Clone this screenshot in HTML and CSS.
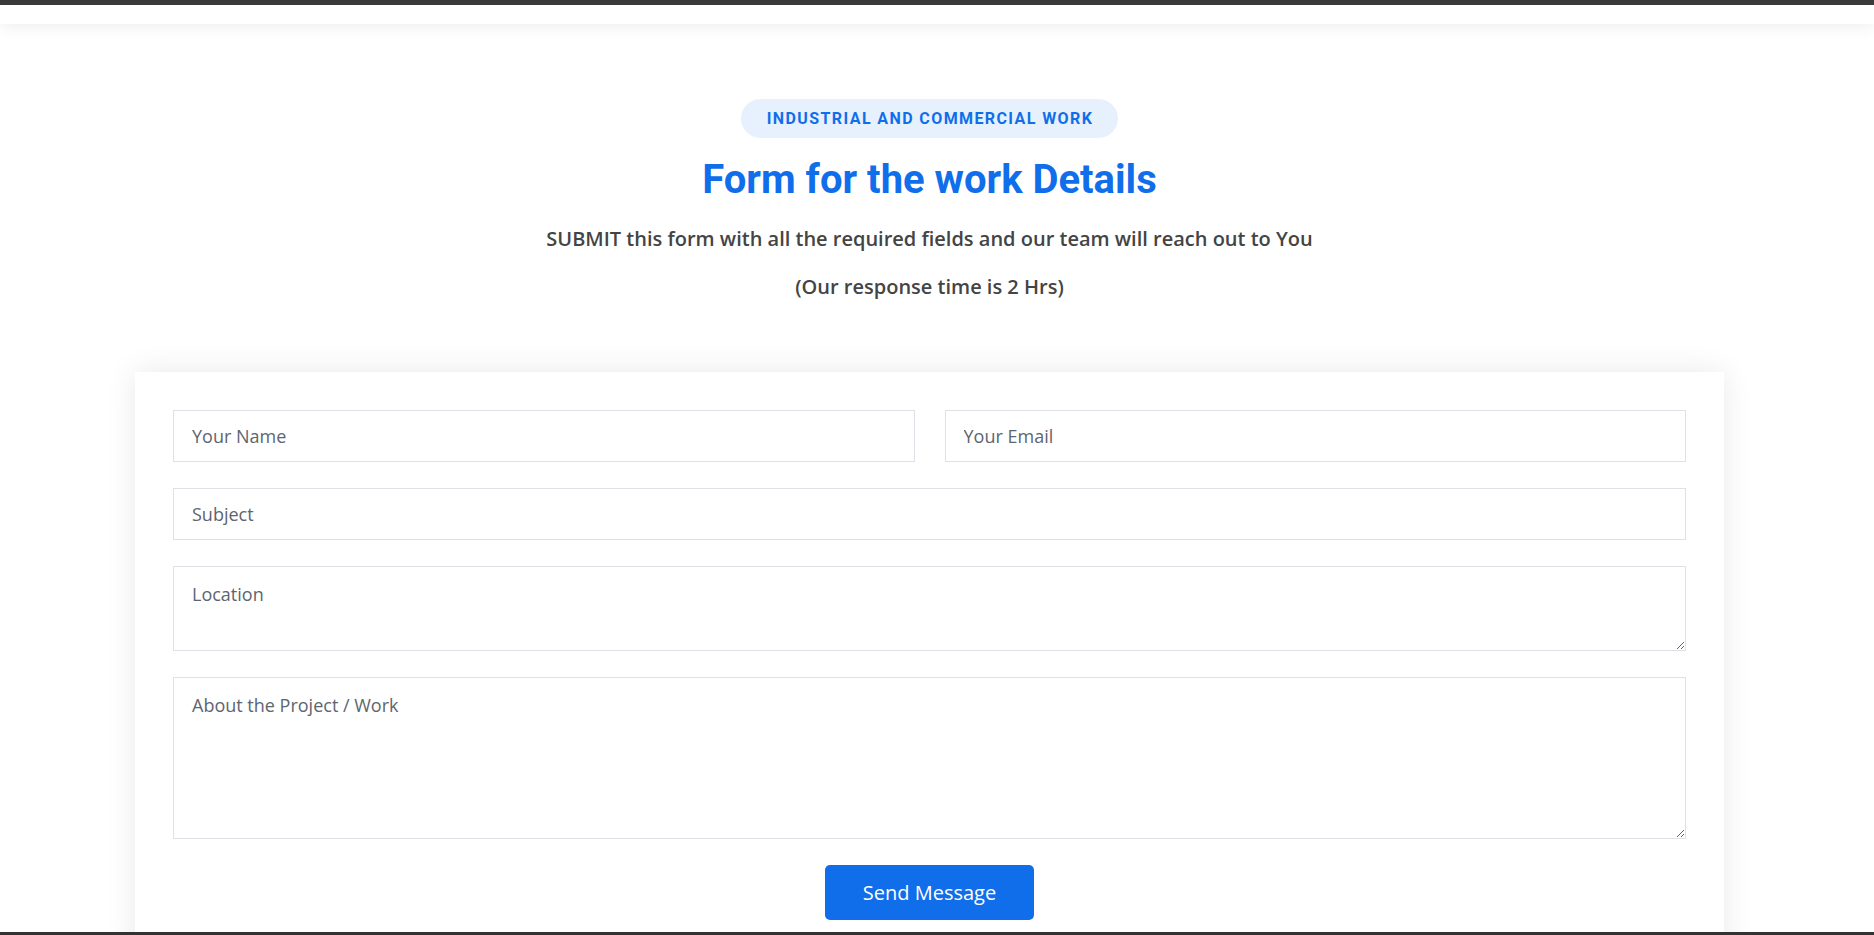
FILE: index.html
```html
<!DOCTYPE html>
<html lang="en">
<head>
<meta charset="utf-8">
<title>Form for the work Details</title>
<link rel="stylesheet" href="styles.css">
</head>
<body>
<header class="topbar"></header>
<div class="page">
  <section class="contact">
    <div class="section-title">
      <span class="badge">INDUSTRIAL AND COMMERCIAL WORK</span>
      <h3 class="heading">Form for the work Details</h3>
      <p class="lead">SUBMIT this form with all the required fields and our team will reach out to You</p>
      <p class="lead">(Our response time is 2 Hrs)</p>
    </div>
    <form class="card">
      <div class="row-2">
        <input class="field" type="text" placeholder="Your Name">
        <input class="field" type="email" placeholder="Your Email">
      </div>
      <input class="field" type="text" placeholder="Subject">
      <textarea class="field area-sm" placeholder="Location"></textarea>
      <textarea class="field area-lg" placeholder="About the Project / Work"></textarea>
      <div class="actions">
        <button class="btn" type="button">Send Message</button>
      </div>
    </form>
  </section>
</div>
<div class="frame-bottom"></div>
</body>
</html>
```

FILE: styles.css
```css
* { box-sizing: border-box; }

html, body {
  margin: 0;
  padding: 0;
  background: #ffffff;
}

body {
  font-family: "Open Sans", "Liberation Sans", sans-serif;
  color: #444444;
  overflow: hidden;
}

.topbar {
  height: 24px;
  background: #ffffff;
  border-top: 5px solid #3a3a3a;
  box-shadow: 0 2px 18px rgba(0, 0, 0, 0.08);
  position: relative;
  z-index: 2;
}

.page {
  padding-right: 15px;
}

.contact {
  width: 1589px;
  margin: 0 auto;
}

.section-title {
  text-align: center;
  padding-top: 75px;
}

.badge {
  display: inline-block;
  height: 39px;
  line-height: 39px;
  padding: 0 25px 0 26px;
  border-radius: 50px;
  background: #e7f1fd;
  color: #106eea;
  font-family: Roboto, "Liberation Sans", sans-serif;
  font-weight: 700;
  font-size: 16px;
  letter-spacing: 1.4px;
}

.heading {
  margin: 18px 0 20px;
  font-family: Roboto, "Liberation Sans", sans-serif;
  font-weight: 700;
  font-size: 40px;
  line-height: 48px;
  color: #106eea;
}

.lead {
  margin: 0 0 18px;
  font-size: 20px;
  line-height: 30px;
  font-weight: 600;
  color: #444444;
}

.lead:last-child {
  margin-bottom: 0;
}

.card {
  margin-top: 70px;
  background: #ffffff;
  padding: 38px 38px 38px;
  box-shadow: 0 0 30px rgba(0, 0, 0, 0.09);
  display: flex;
  flex-direction: column;
  gap: 26px;
}

.row-2 {
  display: grid;
  grid-template-columns: 1fr 1fr;
  gap: 30px;
}

.field {
  display: block;
  width: 100%;
  margin: 0;
  height: 52px;
  padding: 10px 18px;
  border: 1px solid #dee2e6;
  border-radius: 0;
  background: #ffffff;
  font-family: "Open Sans", "Liberation Sans", sans-serif;
  font-size: 18px;
  line-height: 30px;
  color: #444444;
  outline: none;
}

.field::placeholder {
  color: #5d6570;
  opacity: 1;
}

textarea.field {
  padding: 12px 18px;
  resize: vertical;
}

.area-sm { height: 85px; }
.area-lg { height: 162px; }

.actions {
  display: flex;
  justify-content: center;
}

.btn {
  height: 55px;
  padding: 0 38px;
  border: 0;
  border-radius: 5px;
  background: #106eea;
  color: #ffffff;
  font-family: "Open Sans", "Liberation Sans", sans-serif;
  font-size: 20px;
  line-height: 30px;
}

.frame-bottom {
  position: fixed;
  left: 0;
  right: 0;
  bottom: 0;
  height: 3px;
  background: #333333;
}
```
